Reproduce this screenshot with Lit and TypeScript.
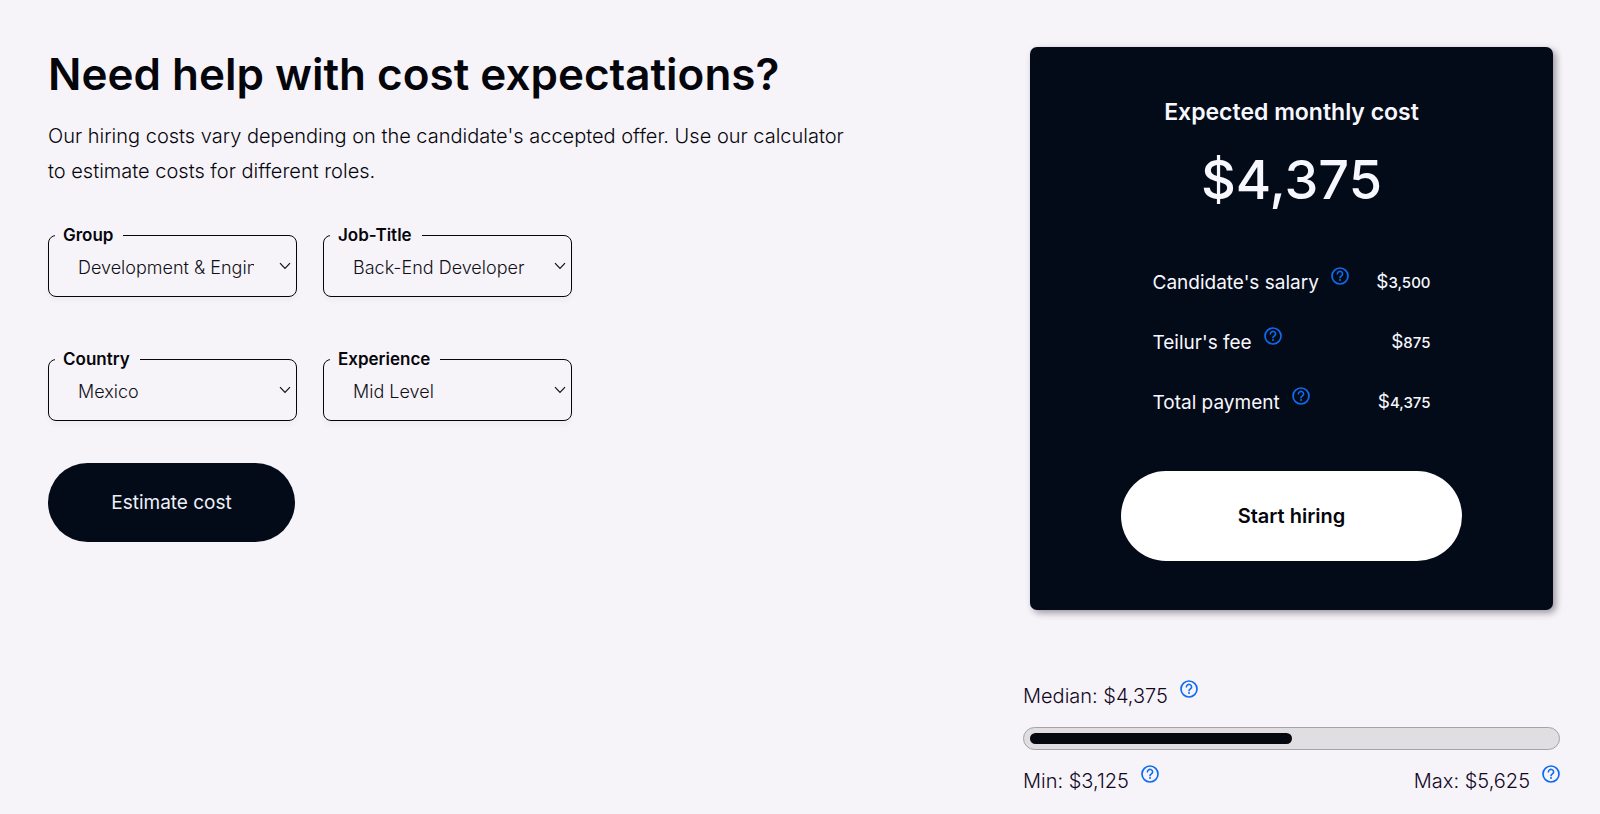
import { LitElement, html, css } from "lit";
import { customElement, property, state } from "lit/decorators.js";

@customElement("help-tip")
class HelpTip extends LitElement {
  @property() label = "";

  static styles = css`
    :host {
      display: block;
      flex: none;
    }
    .tip {
      display: block;
      width: 18px;
      height: 18px;
      padding: 0;
      border: 0;
      background: none;
      color: #0f6bf2;
      cursor: pointer;
    }
    .icon {
      display: block;
    }
  `;

  render() {
    return html`
      <button class="tip" type="button" aria-label=${this.label}>
        <svg class="icon" width="18" height="18" viewBox="0 0 18 18" fill="none" stroke="currentColor">
          <circle cx="9" cy="9" r="8" stroke-width="1.7" />
          <path d="M6.4 6.9a2.6 2.4 0 1 1 4.2 1.8c-.9.7-1.6 1-1.6 2" stroke-width="1.6" stroke-linecap="round" />
          <circle cx="9" cy="13.1" r="1" fill="currentColor" stroke="none" />
        </svg>
      </button>
    `;
  }
}

@customElement("select-field")
class SelectField extends LitElement {
  @property() label = "";
  @property({ type: Array }) options: string[] = [];

  static styles = css`
    :host {
      display: block;
      min-width: 0;
    }
    .field {
      min-width: 0;
      margin: 0;
      padding: 0 0 0 6px;
      border: 1px solid #05060c;
      border-radius: 8px;
      box-shadow: 0 4px 5px rgba(0, 0, 0, 0.03);
    }
    .legend {
      padding: 0 10px 0 8px;
      font-size: 17px;
      font-weight: 600;
      line-height: 24px;
    }
    .control {
      display: grid;
      grid-template-columns: minmax(0, 1fr);
      align-items: center;
    }
    .select {
      grid-area: 1 / 1;
      appearance: none;
      width: 100%;
      height: 49px;
      padding: 0 42px 8px 23px;
      border: 0;
      background: none;
      color: #101018;
      font: inherit;
      font-size: 18px;
      font-weight: 300;
    }
    .chevron {
      grid-area: 1 / 1;
      justify-self: end;
      margin: 0 5px 11px 0;
      pointer-events: none;
    }
  `;

  render() {
    return html`
      <fieldset class="field">
        <legend class="legend"><label for="choice">${this.label}</label></legend>
        <div class="control">
          <select class="select" id="choice">
            ${this.options.map((o) => html`<option>${o}</option>`)}
          </select>
          <svg class="chevron" width="12" height="8" viewBox="0 0 12 8" fill="none" stroke="#101018" stroke-width="1.2">
            <path d="M1 1.2 6 6.4 11 1.2" />
          </svg>
        </div>
      </fieldset>
    `;
  }
}

@customElement("app-root")
class AppRoot extends LitElement {
  @state() min = 3125;
  @state() max = 5625;
  @state() salary = 3500;
  @state() fee = 875;

  static styles = css`
    :host {
      display: block;
      box-sizing: border-box;
      min-height: 100vh;
      padding: 47px 40px 16px 48px;
      background: #f7f4f9;
      color: #05060c;
      font-family: Inter, "Liberation Sans", sans-serif;
    }
    .layout {
      display: grid;
      grid-template-columns: minmax(0, 1fr) minmax(0, 537px);
      gap: 48px;
      align-items: start;
    }
    .title {
      margin: 0;
      font-size: 44px;
      font-weight: 600;
      line-height: 54px;
    }
    .intro {
      max-width: 810px;
      margin: 18px 0 34px;
      font-size: 20px;
      font-weight: 300;
      line-height: 35px;
    }
    .fields {
      display: grid;
      grid-template-columns: repeat(2, minmax(0, 249px));
      gap: 50px 26px;
    }
    .estimate,
    .start {
      display: block;
      border: 0;
      border-radius: 48px;
      font: inherit;
      cursor: pointer;
    }
    .estimate {
      width: 247px;
      height: 79px;
      margin-top: 42px;
      background: #040b18;
      color: #eef0f8;
      font-size: 19px;
      font-weight: 400;
    }
    .card {
      display: flex;
      flex-direction: column;
      align-items: center;
      margin: 0 7px 70px;
      padding: 49px 24px;
      border-radius: 7px;
      background: #040b18;
      color: #f7f8ff;
      box-shadow: 3px 3px 7px rgba(20, 10, 30, 0.4);
    }
    .card-title {
      margin: 0;
      font-size: 23px;
      font-weight: 600;
      line-height: 32px;
    }
    .amount {
      margin: 16px 0 51px;
      font-size: 54px;
      font-weight: 500;
      line-height: 72px;
    }
    .rows {
      display: flex;
      flex-direction: column;
      gap: 28px;
      width: 100%;
      max-width: 278px;
      margin: 0 0 52px;
    }
    .row,
    .caption,
    .ends {
      display: flex;
      justify-content: space-between;
    }
    .term,
    .caption {
      display: flex;
      justify-content: flex-start;
      gap: 12px;
      font-size: 20px;
      line-height: 32px;
      white-space: nowrap;
    }
    .term {
      font-size: 19px;
    }
    .caption {
      font-weight: 300;
      color: #12081f;
    }
    .value {
      margin: 0;
      font-size: 15px;
      font-weight: 500;
      line-height: 32px;
    }
    .currency {
      font-size: 19px;
      font-weight: 400;
      line-height: 19px;
    }
    .start {
      width: 100%;
      max-width: 341px;
      height: 90px;
      background: #fff;
      color: #05060c;
      font-size: 20px;
      font-weight: 600;
    }
    .meter {
      box-sizing: border-box;
      height: 23px;
      margin: 15px 0;
      padding: 5px 6px;
      border: 1px solid #a5a3a7;
      border-radius: 12px;
      background: #e0dee1;
    }
    .fill {
      height: 11px;
      border-radius: 6px;
      background: #05080f;
    }
  `;

  private money(n: number) {
    return n.toLocaleString("en-US");
  }

  private row(label: string, value: number) {
    return html`
      <div class="row">
        <dt class="term">${label}<help-tip label=${`About ${label}`}></help-tip></dt>
        <dd class="value"><span class="currency">$</span>${this.money(value)}</dd>
      </div>
    `;
  }

  private caption(label: string, value: number) {
    return html`
      <div class="caption">
        <span>${label}: $${this.money(value)}</span><help-tip label=${`About ${label}`}></help-tip>
      </div>
    `;
  }

  render() {
    const total = this.salary + this.fee;
    const share = ((total - this.min) / (this.max - this.min)) * 100;
    return html`
      <main class="layout">
        <section>
          <h1 class="title">Need help with cost expectations?</h1>
          <p class="intro">
            Our hiring costs vary depending on the candidate's accepted offer. Use our calculator to estimate costs
            for different roles.
          </p>
          <form @submit=${(e: Event) => e.preventDefault()}>
            <div class="fields">
              <select-field label="Group" .options=${["Development & Engineering"]}></select-field>
              <select-field label="Job-Title" .options=${["Back-End Developer"]}></select-field>
              <select-field label="Country" .options=${["Mexico"]}></select-field>
              <select-field label="Experience" .options=${["Mid Level"]}></select-field>
            </div>
            <button class="estimate" type="submit">Estimate cost</button>
          </form>
        </section>
        <aside>
          <section class="card">
            <h2 class="card-title">Expected monthly cost</h2>
            <div class="amount">$${this.money(total)}</div>
            <dl class="rows">
              ${this.row("Candidate's salary", this.salary)} ${this.row("Teilur's fee", this.fee)}
              ${this.row("Total payment", total)}
            </dl>
            <button class="start" type="button">Start hiring</button>
          </section>
          ${this.caption("Median", total)}
          <div
            class="meter"
            role="meter"
            aria-label="Median cost"
            aria-valuemin=${this.min}
            aria-valuemax=${this.max}
            aria-valuenow=${total}
          >
            <div class="fill" style="width: ${share}%"></div>
          </div>
          <div class="ends">${this.caption("Min", this.min)} ${this.caption("Max", this.max)}</div>
        </aside>
      </main>
    `;
  }
}
